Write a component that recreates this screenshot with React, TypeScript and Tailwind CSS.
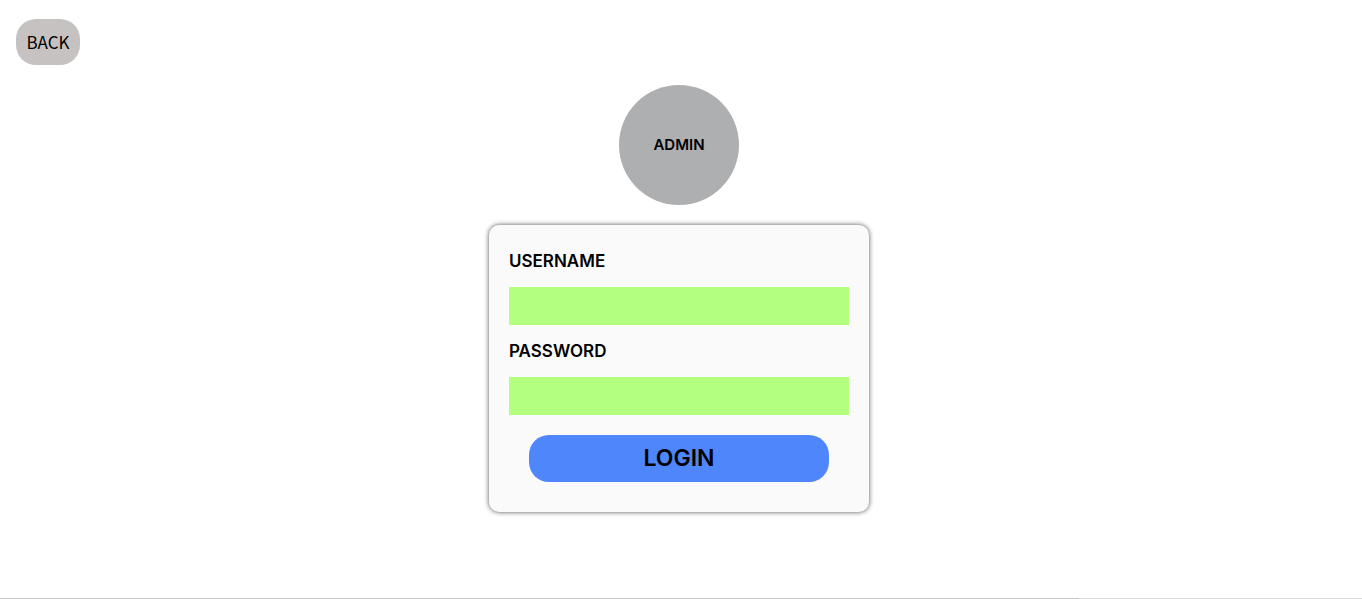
export default function App() {
  return (
    <div className="flex min-h-screen flex-col bg-white font-['Inter','Liberation_Sans',sans-serif] text-black">
      <header className="flex px-4 pt-[19px]">
        <button
          type="button"
          className="h-[46px] w-16 rounded-[20px] bg-[#c6c2c1] font-['Noto_Sans_CJK_SC','Noto_Sans',sans-serif] text-[17px]"
        >
          BACK
        </button>
      </header>

      <main className="flex grow flex-col items-center gap-5 pt-5 pr-1">
        <div className="flex size-[120px] items-center justify-center rounded-full bg-[#aeafb1] pt-px">
          <h1 className="text-[15px] font-semibold">ADMIN</h1>
        </div>

        <form
          onSubmit={(event) => event.preventDefault()}
          className="flex w-full max-w-[380px] flex-col rounded-[10px] bg-[#fafafa] px-5 pt-6 pb-[30px] shadow-[0_0_5px_#000000b0]"
        >
          <label htmlFor="username" className="text-[17px] leading-6 font-semibold">
            USERNAME
          </label>
          <input
            id="username"
            type="text"
            className="mt-[14px] h-[38px] w-full bg-[#b3ff80] px-2 outline-none"
          />
          <label htmlFor="password" className="mt-[14px] text-[17px] leading-6 font-semibold">
            PASSWORD
          </label>
          <input
            id="password"
            type="password"
            className="mt-[14px] h-[38px] w-full bg-[#b3ff80] px-2 outline-none"
          />
          <button
            type="submit"
            className="mx-5 mt-5 h-[47px] rounded-[20px] bg-[#4f86fc] text-[23px] font-semibold"
          >
            LOGIN
          </button>
        </form>
      </main>

      <footer className="flex h-px">
        <div className="w-[79.2%] bg-[#c9c9c9]" />
        <div className="grow bg-[#dadada]" />
      </footer>
    </div>
  );
}
